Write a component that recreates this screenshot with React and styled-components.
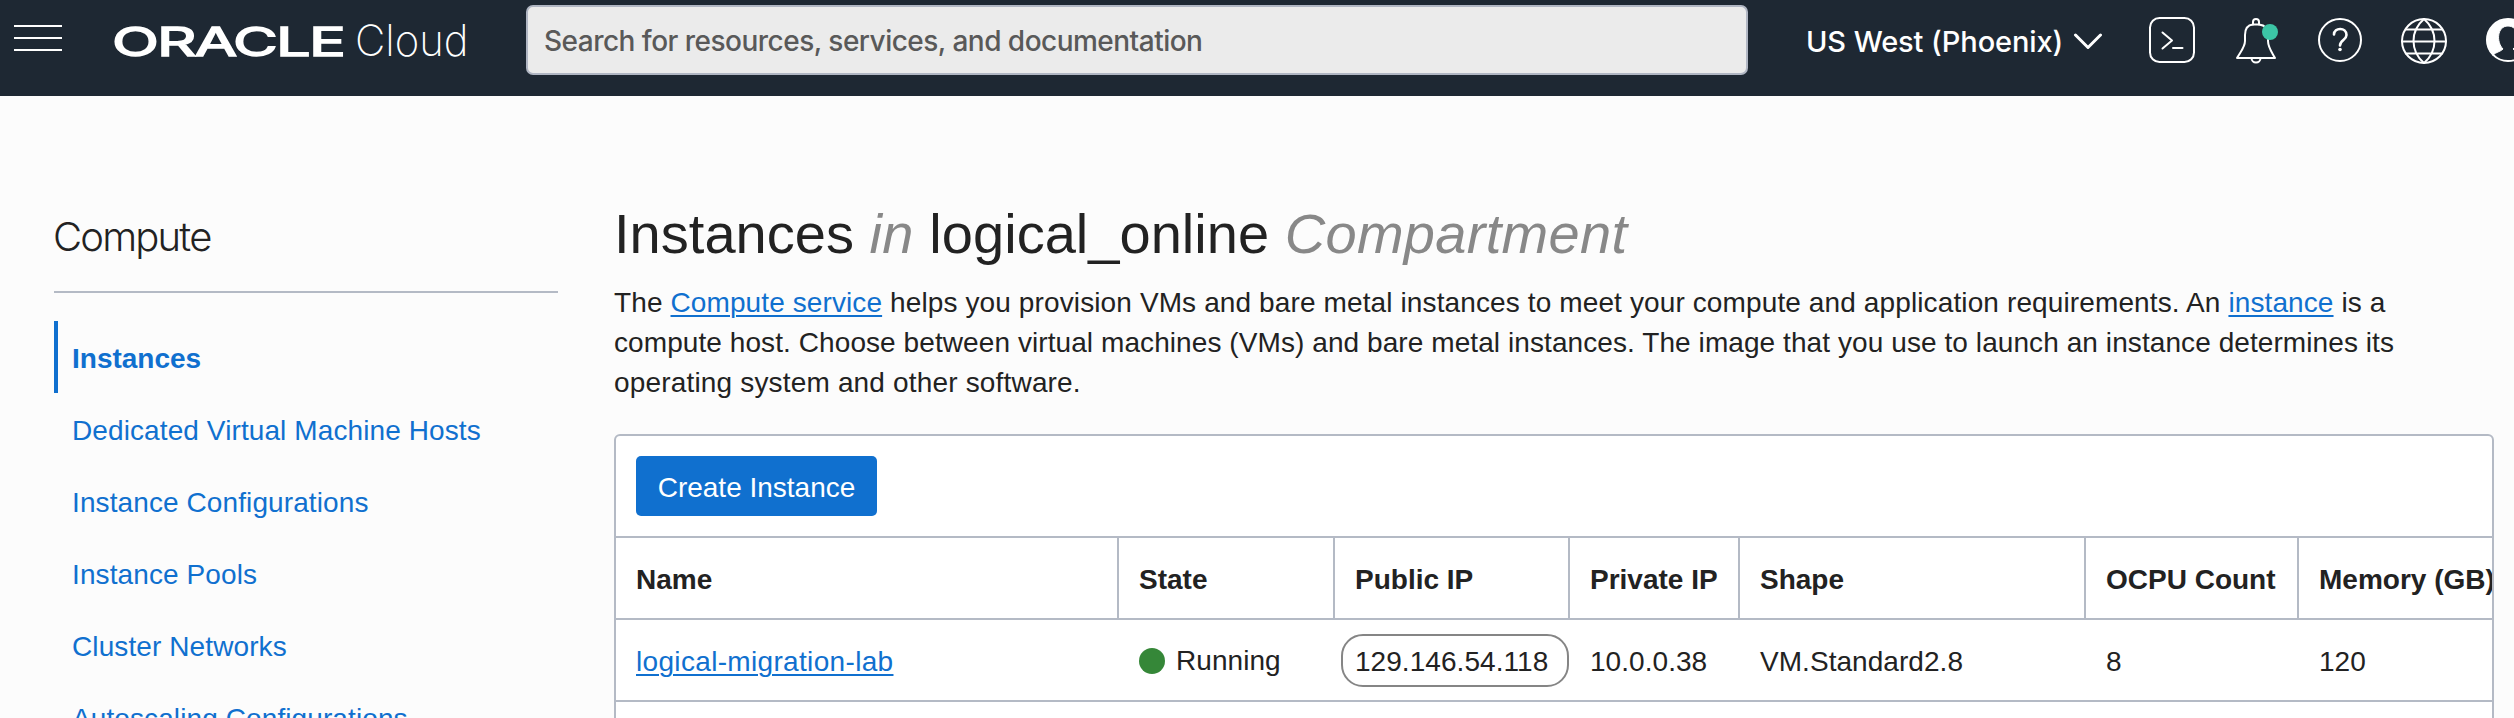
import React from 'react';
import styled, { createGlobalStyle } from 'styled-components';

const GlobalStyle = createGlobalStyle`
  * { box-sizing: border-box; }
  html, body { margin: 0; padding: 0; overflow: hidden; }
  body {
    background: #fcfcfc;
    color: #222;
    font-family: "Liberation Sans", Arial, sans-serif;
    font-size: 28px;
  }
`;

const Page = styled.div`
  display: flex;
  flex-direction: column;
  width: 2514px;
  height: 718px;
  overflow: hidden;
`;

const Header = styled.header`
  display: flex;
  align-items: flex-start;
  flex: none;
  height: 96px;
  background: #1e2833;
  color: #fff;
  overflow: hidden;
`;

const MenuButton = styled.div`
  display: flex;
  flex-direction: column;
  flex: none;
  gap: 10px;
  width: 48px;
  margin: 25px 0 0 14px;
`;

const MenuBar = styled.span`
  height: 2px;
  background: #fff;
`;

const Logo = styled.svg`
  display: block;
  flex: none;
  margin: 12px 0 0 50px;
  overflow: visible;
`;

const Search = styled.div`
  flex: none;
  width: 1222px;
  height: 70px;
  margin: 5px 0 0 44px;
  padding-left: 16px;
  border: 2px solid #b0b6c3;
  border-radius: 7px;
  background: #ebebeb;
  color: #595959;
  font: 500 28px/68px Inter, sans-serif;
  letter-spacing: -0.52px;
  white-space: nowrap;
`;

const Region = styled.div`
  display: flex;
  flex: none;
  align-items: center;
  justify-content: space-between;
  width: 297px;
  height: 84px;
  margin-left: 58px;
  font: 500 29px/84px Inter, sans-serif;
  letter-spacing: -0.1px;
  white-space: nowrap;
`;

const Icon = styled.svg`
  display: block;
  flex: none;
  width: 48px;
  height: 50px;
  margin: 16px 0 0 ${(p) => p.$gap}px;
  fill: none;
  stroke: #fff;
  stroke-width: 2;
  stroke-linecap: round;
  stroke-linejoin: round;
`;

const Body = styled.div`
  display: flex;
  flex: 1;
  min-height: 0;
`;

const Sidebar = styled.nav`
  flex: none;
  width: 504px;
  margin-left: 54px;
`;

const SidebarTitle = styled.h2`
  height: 197px;
  margin: 0 0 28px;
  padding-top: 116px;
  border-bottom: 2px solid #b4bac5;
  text-indent: -1px;
  font: 300 40px/50px Inter, sans-serif;
  letter-spacing: -1.8px;
`;

const NavItem = styled.a`
  display: block;
  height: 72px;
  padding-left: 14px;
  border-left: 4px solid ${(p) => (p.$active ? '#1070cf' : 'transparent')};
  color: #1070cf;
  font-weight: ${(p) => (p.$active ? 700 : 400)};
  line-height: 75px;
  letter-spacing: ${(p) => (p.$active ? 0 : 0.1)}px;
  white-space: nowrap;
`;

const Main = styled.main`
  flex: none;
  width: 1880px;
  margin-left: 56px;
`;

const Title = styled.h1`
  margin: 0;
  padding-top: 106px;
  font-size: 56px;
  font-weight: 400;
  line-height: 64px;
  letter-spacing: 0.03px;
  white-space: nowrap;

  em {
    color: #888;
    letter-spacing: 0.3px;
  }
`;

const Intro = styled.p`
  margin: 17px 0 31px;
  line-height: 40px;
`;

const IntroLine = styled.span`
  display: block;
  letter-spacing: ${(p) => p.$spacing}px;
  white-space: nowrap;
`;

const Link = styled.a`
  color: #1070cf;
  letter-spacing: ${(p) => p.$spacing || 0.1}px;
  text-decoration: underline;
  text-decoration-thickness: 2px;
  text-underline-offset: 3px;
`;

const Panel = styled.section`
  height: 320px;
  border: 2px solid #b4bac5;
  border-radius: 6px;
  background: #fff;
  overflow: hidden;
`;

const Toolbar = styled.div`
  height: 102px;
  padding: 20px;
  border-bottom: 2px solid #b4bac5;
`;

const CreateButton = styled.button`
  display: block;
  width: 241px;
  height: 60px;
  padding: 3px 0 0;
  border: 0;
  border-radius: 5px;
  background: #1070cf;
  color: #fff;
  font: 400 28px/57px "Liberation Sans", Arial, sans-serif;
`;

const Row = styled.div`
  display: grid;
  grid-template-rows: 80px;
  grid-template-columns: 503px 216px 235px 170px 346px 213px 193px;
  height: 82px;
  border-bottom: 2px solid #b4bac5;
  line-height: 83px;
  white-space: nowrap;
`;

const HeadCell = styled.div`
  padding-left: 20px;
  border-right: ${(p) => (p.$last ? 0 : 2)}px solid #b4bac5;
  font-weight: 700;
`;

const Cell = styled.div`
  position: relative;
  padding-left: 20px;
  letter-spacing: 0.05px;
`;

const Status = styled.div`
  display: flex;
  align-items: center;
  gap: 11px;
  height: 80px;

  &::before {
    content: "";
    width: 26px;
    height: 26px;
    margin-top: 2px;
    border-radius: 50%;
    background: #358738;
  }
`;

const Highlight = styled.span`
  position: absolute;
  top: 14px;
  left: 6px;
  width: 228px;
  height: 53px;
  border: 2px solid #858585;
  border-radius: 22px;
`;

const NAV = [
  'Instances',
  'Dedicated Virtual Machine Hosts',
  'Instance Configurations',
  'Instance Pools',
  'Cluster Networks',
  'Autoscaling Configurations',
];

const COLUMNS = ['Name', 'State', 'Public IP', 'Private IP', 'Shape', 'OCPU Count', 'Memory (GB)'];

function TopBar() {
  return (
    <Header>
      <MenuButton>
        <MenuBar />
        <MenuBar />
        <MenuBar />
      </MenuButton>
      <Logo width="370" height="60" fill="#fff" fontFamily="Inter, sans-serif">
        <text x="0" y="43.5" fontSize="40" fontWeight="400" stroke="#fff" strokeWidth="1.5" letterSpacing="-1.2" textLength="232" lengthAdjust="spacingAndGlyphs">ORACLE</text>
        <text x="243" y="43.5" fontSize="43" fontWeight="200" textLength="113.5" lengthAdjust="spacingAndGlyphs">Cloud</text>
      </Logo>
      <Search>Search for resources, services, and documentation</Search>
      <Region>
        US West (Phoenix)
        <svg width="30" height="18" fill="none" stroke="#fff" strokeWidth="3" strokeLinecap="round" strokeLinejoin="round">
          <path d="M2.5 2 15 14.5 27.5 2" />
        </svg>
      </Region>
      <Icon $gap={45} viewBox="0 0 48 50">
        <rect x="2" y="2" width="44" height="44" rx="9.5" />
        <path d="M14.5 16.5 24 24.5 14.5 32.5M25 32h9.5" />
      </Icon>
      <Icon $gap={37} viewBox="0 0 48 50">
        <path d="M4 42H42C38 35 35 31 35 25V19C35 12 31 9 26 8.5H20C15 9 12 13 12 19V25C12 31 8 35 4 42Z" />
        <path d="M20 8.5V6A3 3 0 0 1 26 6V8.5M18.5 42A4.5 4.5 0 0 0 27.5 42" />
        <circle cx="37" cy="16" r="8" fill="#3cc5a6" stroke="none" />
      </Icon>
      <Icon $gap={35} viewBox="0 0 48 50">
        <circle cx="24" cy="24" r="21" />
        <path d="M18 18.5C18 11 30.5 11 30.5 19C30.5 24 24 24 24 29.5" strokeWidth="2.6" />
        <circle cx="24" cy="33.5" r="1.8" fill="#fff" stroke="none" />
      </Icon>
      <Icon $gap={36} viewBox="0 0 48 50">
        <circle cx="24" cy="25" r="22" />
        <path d="M2 25.5H46M6 13.5H42M6 37.5H42M24 3C10 15 10 35 24 47M24 3C38 15 38 35 24 47" />
      </Icon>
      <Icon $gap={36} viewBox="0 0 48 50">
        <circle cx="24" cy="24" r="21" />
        <path d="M9 39A21 21 0 1 1 39 39C36 36 32 36 29 33C37 26 35 10 24 10C13 10 12 26 19 33C16 36 12 36 9 39Z" fill="#fff" strokeWidth="1" />
      </Icon>
    </Header>
  );
}

export default function App() {
  return (
    <Page>
      <GlobalStyle />
      <TopBar />
      <Body>
        <Sidebar>
          <SidebarTitle>Compute</SidebarTitle>
          {NAV.map((label, i) => (
            <NavItem key={label} $active={i === 0}>{label}</NavItem>
          ))}
        </Sidebar>
        <Main>
          <Title>
            Instances <em>in</em> logical_online <em>Compartment</em>
          </Title>
          <Intro>
            <IntroLine $spacing={0.12}>
              The <Link>Compute service</Link> helps you provision VMs and bare metal instances to meet your compute and
              application requirements. An <Link>instance</Link> is a
            </IntroLine>
            <IntroLine $spacing={0.08}>
              compute host. Choose between virtual machines (VMs) and bare metal instances. The image that you use to
              launch an instance determines its
            </IntroLine>
            <IntroLine $spacing={0.17}>operating system and other software.</IntroLine>
          </Intro>
          <Panel>
            <Toolbar>
              <CreateButton>Create Instance</CreateButton>
            </Toolbar>
            <Row>
              {COLUMNS.map((name, i) => (
                <HeadCell key={name} $last={i === COLUMNS.length - 1}>{name}</HeadCell>
              ))}
            </Row>
            <Row>
              <Cell><Link $spacing={0.33}>logical-migration-lab</Link></Cell>
              <Cell><Status>Running</Status></Cell>
              <Cell>129.146.54.118<Highlight /></Cell>
              <Cell>10.0.0.38</Cell>
              <Cell>VM.Standard2.8</Cell>
              <Cell>8</Cell>
              <Cell>120</Cell>
            </Row>
          </Panel>
        </Main>
      </Body>
    </Page>
  );
}
